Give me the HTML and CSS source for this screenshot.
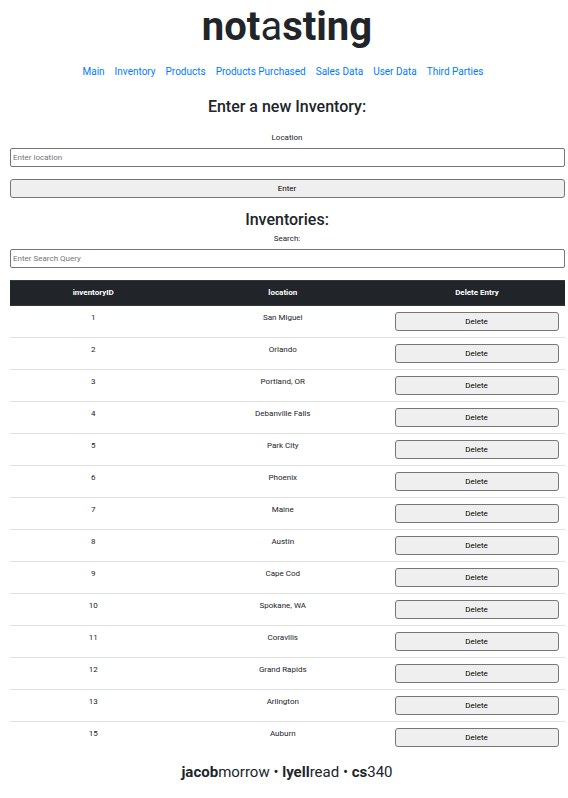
FILE: index.html
```html
<!DOCTYPE html>
<html lang="en">
<head>
<meta charset="utf-8">
<title>notasting</title>
<link rel="stylesheet" href="styles.css">
</head>
<body>
<header>
<h1>not<span class="light">a</span>sting</h1>
<nav>
<a href="#">Main</a><a href="#">Inventory</a><a href="#">Products</a><a href="#">Products Purchased</a><a href="#">Sales Data</a><a href="#">User Data</a><a href="#">Third Parties</a>
</nav>
</header>
<main>
<h2>Enter a new Inventory:</h2>
<form class="entry">
<label for="location">Location</label>
<input id="location" type="text" placeholder="Enter location">
<button type="button">Enter</button>
</form>
<h2>Inventories:</h2>
<form class="search">
<label for="query">Search:</label>
<input id="query" type="text" placeholder="Enter Search Query">
</form>
<table>
<thead><tr><th>inventoryID</th><th>location</th><th>Delete Entry</th></tr></thead>
<tbody>
<tr><td>1</td><td>San Miguel</td><td><button type="button">Delete</button></td></tr>
<tr><td>2</td><td>Orlando</td><td><button type="button">Delete</button></td></tr>
<tr><td>3</td><td>Portland, OR</td><td><button type="button">Delete</button></td></tr>
<tr><td>4</td><td>Debanville Falls</td><td><button type="button">Delete</button></td></tr>
<tr><td>5</td><td>Park City</td><td><button type="button">Delete</button></td></tr>
<tr><td>6</td><td>Phoenix</td><td><button type="button">Delete</button></td></tr>
<tr><td>7</td><td>Maine</td><td><button type="button">Delete</button></td></tr>
<tr><td>8</td><td>Austin</td><td><button type="button">Delete</button></td></tr>
<tr><td>9</td><td>Cape Cod</td><td><button type="button">Delete</button></td></tr>
<tr><td>10</td><td>Spokane, WA</td><td><button type="button">Delete</button></td></tr>
<tr><td>11</td><td>Coravllis</td><td><button type="button">Delete</button></td></tr>
<tr><td>12</td><td>Grand Rapids</td><td><button type="button">Delete</button></td></tr>
<tr><td>13</td><td>Arlington</td><td><button type="button">Delete</button></td></tr>
<tr><td>15</td><td>Auburn</td><td><button type="button">Delete</button></td></tr>
</tbody>
</table>
</main>
<footer><b>jacob</b>morrow • <b>lyell</b>read • <b>cs</b>340</footer>
</body>
</html>
```
FILE: styles.css
```css
* { box-sizing: border-box; }
body {
  margin: 0;
  padding: 3px 3px 0 10px;
  font: 8px/12px Roboto, sans-serif;
  color: #212529;
  text-align: center;
  background: #fff;
}
h1, h2 { margin: 0; }
h1 { font-size: 40px; line-height: 48px; font-weight: 700; }
.light { font-weight: 400; }
nav {
  display: flex;
  justify-content: center;
  gap: 10px;
  margin: 13px 9px 0 0;
  font-size: 10px;
  line-height: 16px;
}
a { color: #007bff; text-decoration: none; }
h1, h2 { padding-right: 1px; }
h2 { font-size: 16px; line-height: 20px; font-weight: 500; }
main { padding-top: 17px; }
label { display: block; padding-right: 1px; }
input, button {
  display: block;
  width: 100%;
  height: 19px;
  border: 1px solid #767676;
  border-radius: 2px;
  font: inherit;
  color: inherit;
}
input { padding: 0 2px; background: #fff; }
input::placeholder { color: #757575; opacity: 1; }
button { padding: 0 1px 0 0; background: #efefef; color: #000; border-radius: 3px; }
.entry { margin: 15px 0 12px; }
.entry input { margin: 4px 0 12px; }
.search { margin: 3px 0 12px; }
.search input { margin-top: 4px; }
table { width: 100%; border-collapse: collapse; }
th { padding: 6px; font-weight: 700; color: #fff; background: #212529; border: 1px solid #32383e; border-width: 1px 0 0; }
td { padding: 6px; border-top: 1px solid #dee2e6; vertical-align: top; }
tbody tr:first-child td { border-top-color: #32383e; }
th:nth-child(1) { width: 30%; }
th:nth-child(3) { width: 176px; }
footer { margin-top: 8px; padding-right: 1px; font-size: 15px; line-height: 22px; }
```
